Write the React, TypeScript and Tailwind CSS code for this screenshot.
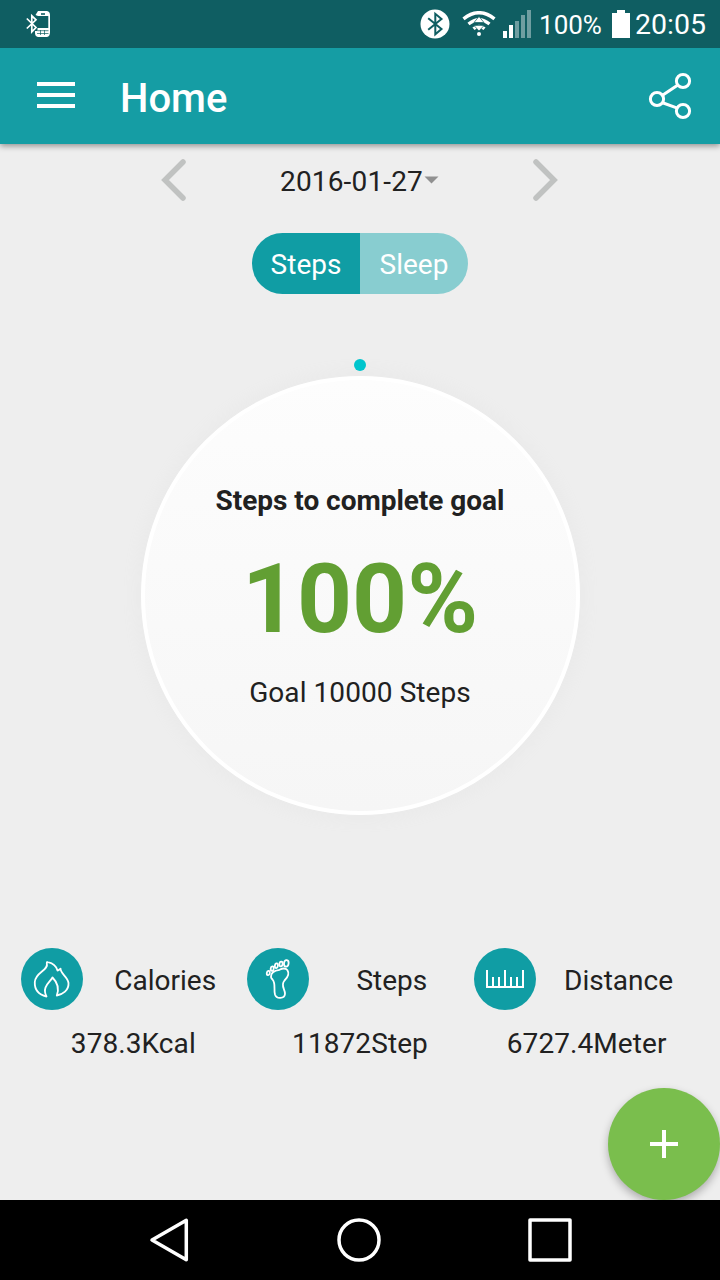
import type { ReactNode } from "react";

const StatusBar = () => {
  return (
    <div className="relative z-10 flex h-12 shrink-0 items-center justify-between bg-[#0f5e62] pl-[26px] pr-[14px] text-white">
      <svg width="26" height="28" viewBox="0 0 26 28" fill="none">
        <path d="M0.8 8.5 L10 17.5 L5.8 21.8 V5.8 L10 9.8 L0.8 18.5" stroke="white" strokeWidth="1.7" />
        <path
          d="M12 1 H21 Q24 1.5 24 5 V22 Q24 26.5 21 27 H12 Q9 26.5 9 23 V21 H11.5 V18 H22.3 V6 H12 L9.5 5 Z"
          fill="white"
        />
        <path d="M15 3.2 H19 V4.8 H15 Z" fill="#0f5e62" />
        <path d="M11.5 20.7 H22.5 M11 23.5 H22.5 M14.5 20 V25 M18.5 20 V25" stroke="#0f5e62" strokeWidth="0.7" />
      </svg>

      <div className="flex h-full items-center">
        <svg width="30" height="30" viewBox="0 0 30 30" fill="none">
          <circle cx="15" cy="15" r="14.5" fill="white" />
          <path d="M8.2 9.3 L21.5 20 L15.3 25.3 V4.8 L21.5 10 L8.2 20.7" stroke="#0f5e62" strokeWidth="2" />
        </svg>
        <svg className="ml-3" width="34" height="26" viewBox="0 0 34 26" fill="none">
          <path d="M1.5 7.8 Q17 -4.3 32.5 7.8" stroke="white" strokeWidth="3.5" />
          <path d="M6.5 13 Q17 4.5 27.5 13" stroke="white" strokeWidth="3.3" />
          <path d="M11.5 17.8 Q17 13 22.5 17.8" stroke="white" strokeWidth="3.2" />
          <path d="M17 5.5 L22 11.5 H12 Z M12 14.5 H22 L17 20 Z" fill="white" stroke="#0f5e62" strokeWidth="0.7" />
          <circle cx="17" cy="23" r="2" fill="white" />
        </svg>
        <svg className="ml-[7px]" width="29" height="28" viewBox="0 0 29 28" shapeRendering="crispEdges">
          <path d="M0 21 H4 V28 H0 Z M6 15 H10 V28 H6 Z" fill="white" />
          <path d="M12 11 H16 V28 H12 Z M18 5 H22 V28 H18 Z M24 0 H28 V28 H24 Z" fill="#6f9ea1" />
        </svg>
        <span className="ml-[7px] w-[66px] pt-[2px] text-[26px] leading-none">100%</span>
        <svg className="ml-[7px]" width="18" height="28" viewBox="0 0 18 28" shapeRendering="crispEdges">
          <path d="M5 0 H13 V3 H18 V28 H0 V3 H5 Z" fill="white" />
        </svg>
        <span className="ml-[5px] pt-[3px] text-[28.5px] leading-none">20:05</span>
      </div>
    </div>
  );
};

const AppBar = () => {
  return (
    <header className="relative flex h-24 shrink-0 items-center bg-[#159da4] pl-[37px] pr-[28px] text-white shadow-[0_2px_6px_rgba(0,0,0,0.4)]">
      <div className="flex w-[38px] flex-col gap-[7px] pb-[2px]">
        <div className="h-1 bg-white" />
        <div className="h-1 bg-white" />
        <div className="h-1 bg-white" />
      </div>
      <h1 className="ml-[45px] flex-1 pt-[6px] text-[40px] leading-[48px] font-medium">Home</h1>
      <svg width="44" height="48" viewBox="0 0 44 48" fill="none" stroke="white" strokeWidth="3">
        <circle cx="9" cy="27" r="6.6" />
        <circle cx="35" cy="9" r="6.6" />
        <circle cx="35" cy="39" r="6.6" />
        <path d="M14.5 23.3 L29.5 13.2 M15.3 31 L28.7 35.8" />
      </svg>
    </header>
  );
};

const DatePicker = () => {
  return (
    <div className="flex h-[72px] items-center justify-between pl-[161px] pr-[162px]">
      <svg width="26" height="44" viewBox="0 0 26 44" fill="none">
        <path d="M22 4 L4 22 L22 40" stroke="#c0c2c1" strokeWidth="5.5" strokeLinecap="round" />
      </svg>
      <div className="flex items-center">
        <span className="pt-1 tracking-[0.15px]">2016-01-27</span>
        <svg className="ml-px" width="15" height="8" viewBox="0 0 15 8">
          <path d="M0.5 0.5 H14.5 L7.5 7.5 Z" fill="#909090" />
        </svg>
      </div>
      <svg width="26" height="44" viewBox="0 0 26 44" fill="none">
        <path d="M4 4 L22 22 L4 40" stroke="#c0c2c1" strokeWidth="5.5" strokeLinecap="round" />
      </svg>
    </div>
  );
};

const ModeToggle = () => {
  return (
    <div className="mx-auto mt-[17px] flex h-[61px] w-[216px] overflow-hidden rounded-full text-white">
      <button className="flex-1 bg-[#109da4] pt-[2px]">Steps</button>
      <button className="flex-1 bg-[#88cdd0] pt-[2px]">Sleep</button>
    </div>
  );
};

const GoalDial = () => {
  return (
    <div className="mx-auto mt-[65px] flex flex-col items-center">
      <div className="relative z-10 h-3 w-3 rounded-full bg-[#00c5cd]" />
      <div className="mt-[5px] flex h-[439px] w-[439px] flex-col items-center rounded-full border-4 border-white bg-linear-to-b from-[#fdfdfd] to-[#f6f6f6] shadow-[0_0_12px_8px_#ebebeb]">
        <p className="mt-[104px] font-bold tracking-[-0.03px]">Steps to complete goal</p>
        <p className="mt-[25px] text-[96px] leading-[112px] font-bold text-[#629f33]">100%</p>
        <p className="mt-[21px] tracking-[0.08px]">Goal 10000 Steps</p>
      </div>
    </div>
  );
};

const FlameIcon = () => (
  <svg width="62" height="62" viewBox="0 0 62 62" fill="none" stroke="white" strokeWidth="1.8" strokeLinejoin="round">
    <path d="M25.5 48.5 C17 46.5 13.5 41 13.8 34 C14.3 24 28 22.5 25.8 15 C25.8 14 26.3 14 27 14.2 C32.5 15.5 35.5 19 36.5 22.5 C37.8 22.5 38.5 21.5 39.5 20.6 C39.5 26 46.5 28.5 47.5 35 C48 42.5 41.5 46.5 35.8 47.5 C38.5 40 35.5 33.5 31.5 29.5 C29 34.5 20.5 38.5 25.5 48.5 Z" />
  </svg>
);

const FootIcon = () => (
  <svg width="62" height="62" viewBox="0 0 62 62" fill="none" stroke="white" strokeWidth="1.8">
    <path d="M24 29 C23.5 24 28 22.5 32.5 21.8 C35 20.5 38.5 20 40.3 22 C43 26 40.5 29.5 37.5 32.5 C33 37.5 38.5 41.5 38 46 C37.5 50.8 29.5 51.5 28 46.5 C26.5 41 29 35.5 25.5 31.5 C24.5 30.5 24 30 24 29 Z" />
    <ellipse cx="21.3" cy="25" rx="1.5" ry="2.2" transform="rotate(8 21.3 25)" />
    <ellipse cx="25.2" cy="20.7" rx="1.5" ry="2.3" transform="rotate(8 25.2 20.7)" />
    <ellipse cx="29.4" cy="17.7" rx="1.5" ry="2.4" transform="rotate(8 29.4 17.7)" />
    <ellipse cx="34" cy="16" rx="1.6" ry="2.4" transform="rotate(8 34 16)" />
    <ellipse cx="39.3" cy="15.4" rx="2.3" ry="3.3" transform="rotate(8 39.3 15.4)" />
  </svg>
);

const RulerIcon = () => (
  <svg width="62" height="62" viewBox="0 0 62 62" fill="none" stroke="white" strokeWidth="2">
    <path d="M13 22 V39 H49 V22 M19 29 V39 M25 29 V39 M31 22 V39 M37 29 V39 M43 29 V39" />
  </svg>
);

const stats = [
  { label: "Calories", value: "378.3Kcal", icon: <FlameIcon /> },
  { label: "Steps", value: "11872Step", icon: <FootIcon /> },
  { label: "Distance", value: "6727.4Meter", icon: <RulerIcon /> },
];

const Stat = ({ label, value, icon }: { label: string; value: string; icon: ReactNode }) => {
  return (
    <div className="flex flex-col">
      <div className="flex h-[62px] items-center pl-[0.7px]">
        <div className="h-[62px] w-[62px] rounded-full bg-[#109da4]">{icon}</div>
        <span className="flex-1 pt-[3px] pl-px text-center">{label}</span>
      </div>
      <p className="mt-[17px] text-center tracking-[0.08px]">{value}</p>
    </div>
  );
};

const NavBar = () => {
  return (
    <nav className="relative flex h-20 shrink-0 items-center justify-between bg-black pl-[149px] pr-[147px]">
      <svg width="42" height="46" viewBox="0 0 42 46" fill="none" stroke="white" strokeWidth="3.5">
        <path d="M3 23 L37.3 3.3 V42.7 Z" strokeLinejoin="round" />
      </svg>
      <svg width="46" height="46" viewBox="0 0 46 46" fill="none" stroke="white" strokeWidth="3.5">
        <circle cx="23" cy="23" r="20" />
      </svg>
      <svg width="46" height="46" viewBox="0 0 46 46" fill="none" stroke="white" strokeWidth="3.5">
        <path d="M3 3 H43 V43 H3 Z" strokeLinejoin="round" />
      </svg>
    </nav>
  );
};

const App = () => {
  return (
    <div className="flex h-[1280px] w-[720px] flex-col overflow-hidden bg-[#eeeeee] font-['Roboto',sans-serif] text-[28px] leading-[34px] text-[#212121]">
      <StatusBar />
      <AppBar />
      <main className="relative flex flex-1 flex-col">
        <DatePicker />
        <ModeToggle />
        <GoalDial />
        <div className="mt-[133px] grid grid-cols-3 px-5">
          {stats.map((stat) => (
            <Stat key={stat.label} {...stat} />
          ))}
        </div>
        <div className="flex-1" />
        <button className="absolute right-0 bottom-0 flex h-28 w-28 items-center justify-center rounded-full bg-[#7abe4d] shadow-[0_4px_9px_rgba(0,0,0,0.28)]">
          <svg width="28" height="28" viewBox="0 0 28 28" stroke="white" strokeWidth="4">
            <path d="M14 0 V28 M0 14 H28" />
          </svg>
        </button>
      </main>
      <NavBar />
    </div>
  );
};

export default App;
